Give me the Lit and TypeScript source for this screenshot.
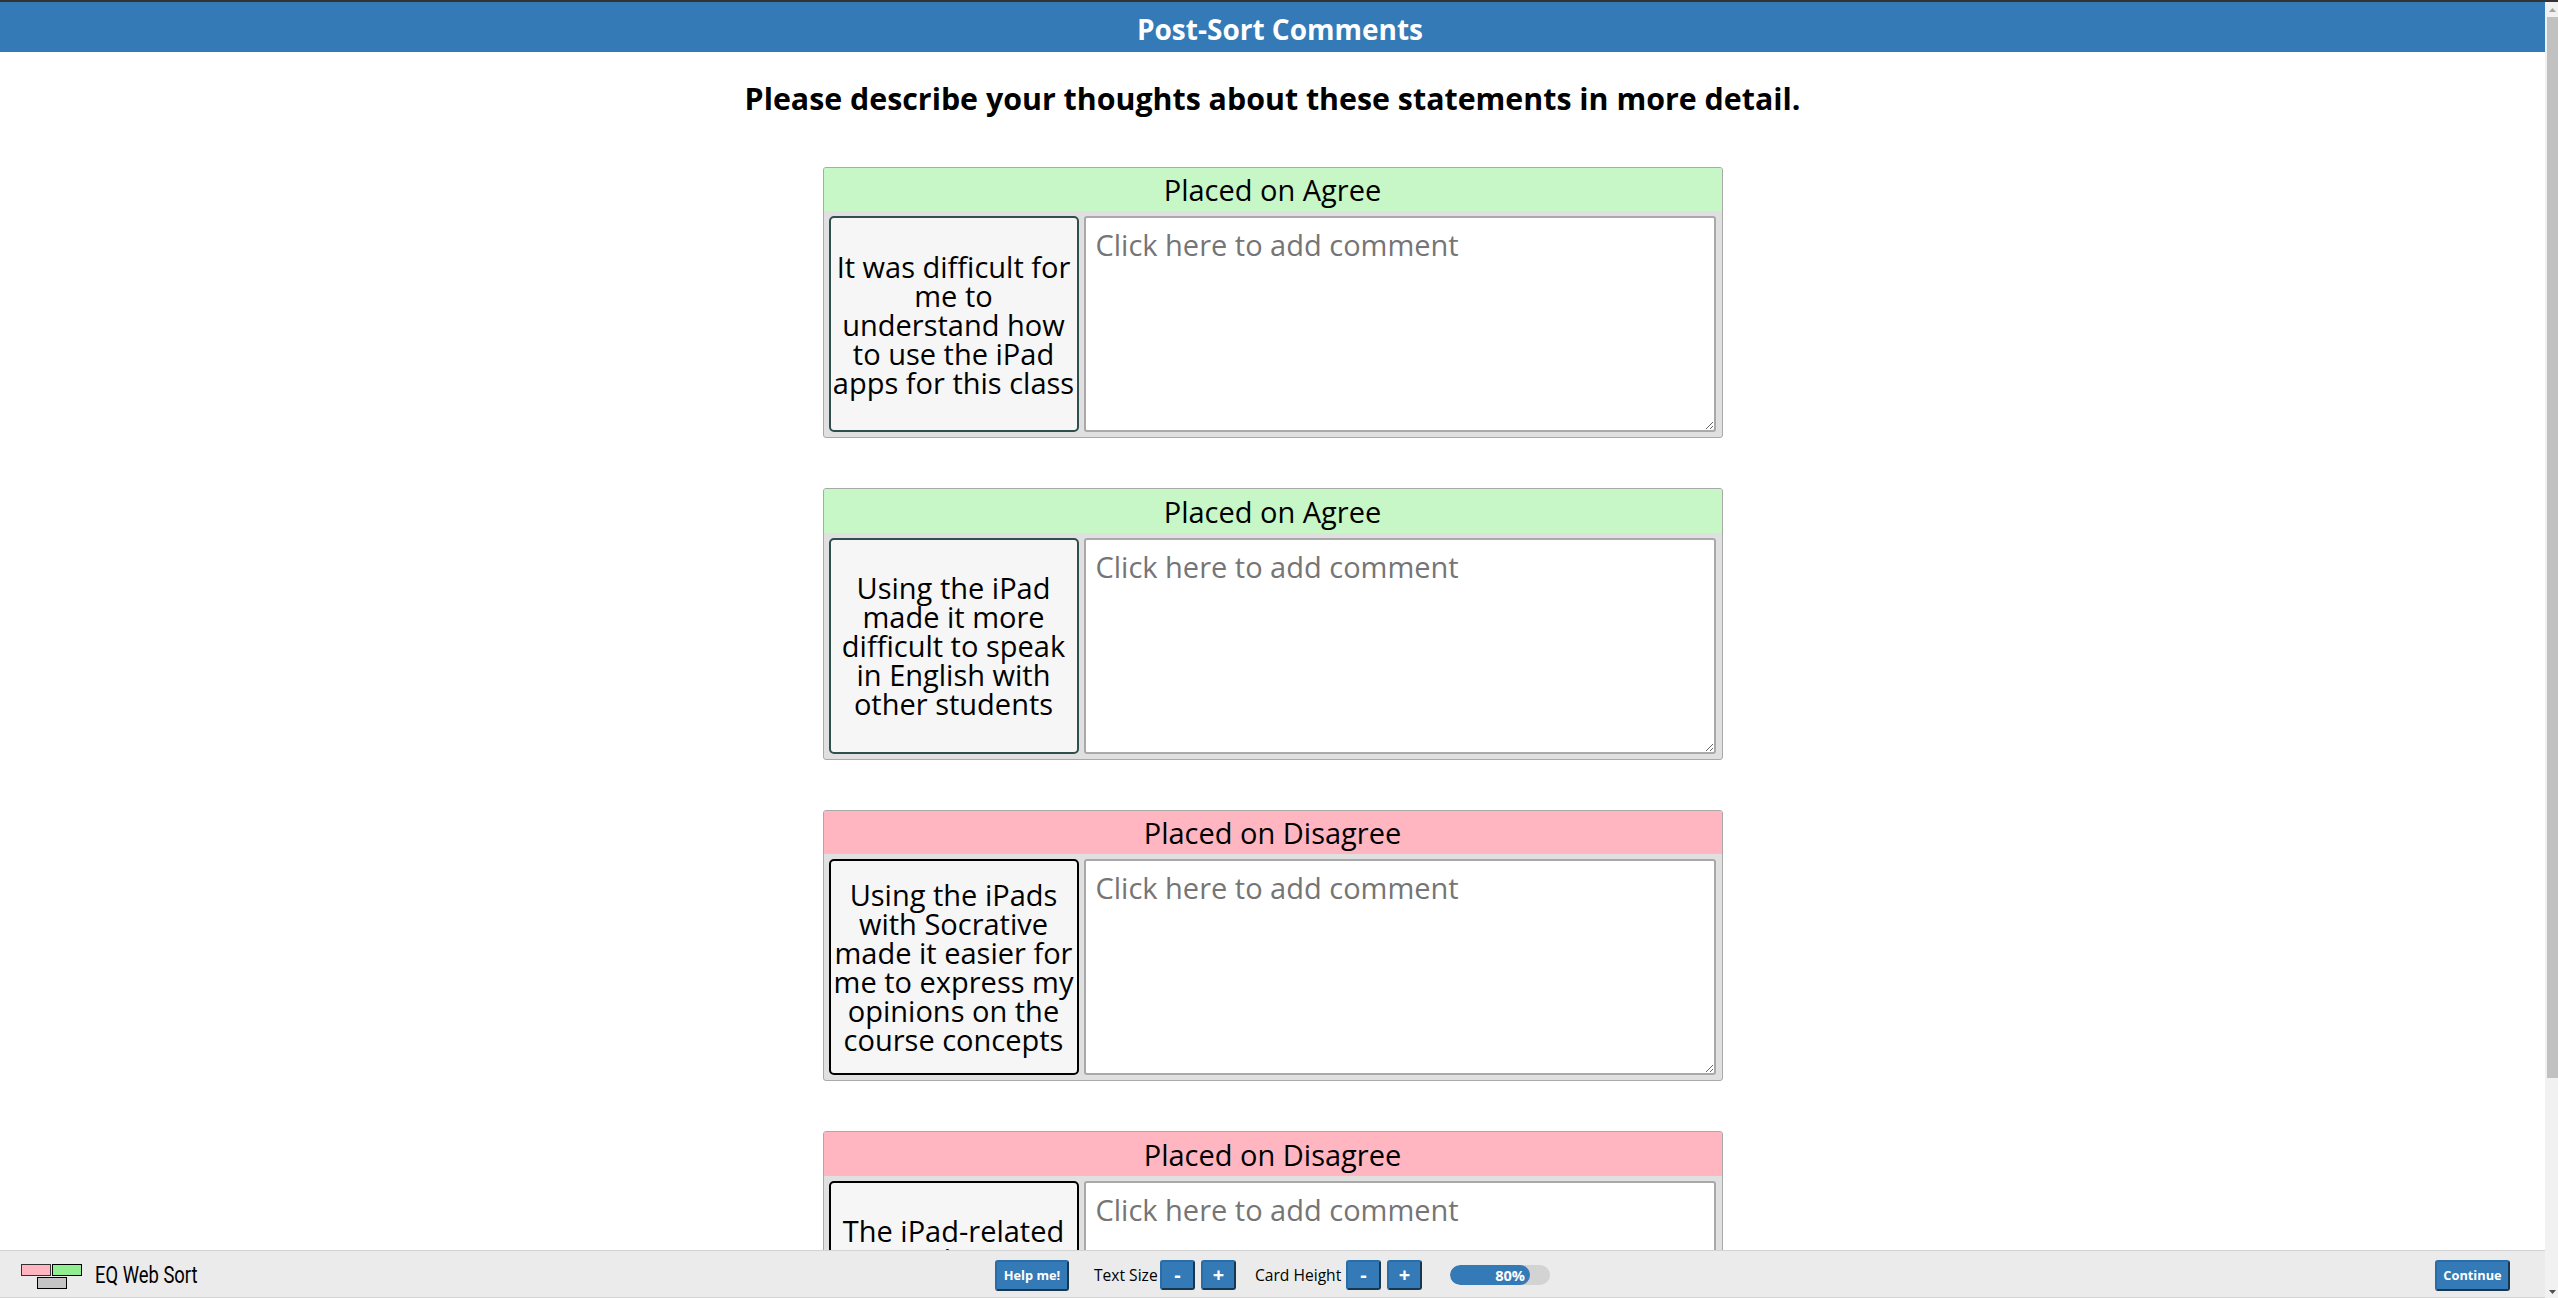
import { LitElement, html, css } from "lit";
import { customElement, property } from "lit/decorators.js";

@customElement("comment-card")
class CommentCard extends LitElement {
  @property() side = "agree";
  @property() statement = "";

  static styles = css`
    :host { display: block; }
    .panel { box-sizing: border-box; width: 900px; height: 271.39px; border: 1px solid darkgray; border-radius: 3px; background: #e0e0e0; overflow: hidden; }
    .head { box-sizing: border-box; height: 43.39px; padding-top: 0.39px; text-align: center; font-size: 29px; line-height: 43px; }
    .agree .head { background: #c7f6c7; }
    .disagree .head { background: lightpink; }
    .row { display: flex; padding: 5px 6px 5px 5px; gap: 5px; }
    .card { box-sizing: border-box; width: 250px; height: 216px; border: 2px solid darkslategray; border-radius: 5px; padding: 0 2px; background: #f6f6f6; display: flex; align-items: center; justify-content: center; text-align: center; font-size: 29px; line-height: 29px; }
    .disagree .card { border-color: black; }
    textarea { display: block; box-sizing: border-box; width: 632px; height: 216px; margin: 0; border: 2px solid darkgray; border-radius: 3px; padding: 7px 10px; font: 29px "Open Sans", sans-serif; resize: both; background: white; outline: none; }
    textarea::placeholder { color: #757575; }
  `;

  render() {
    return html`<div class="panel ${this.side}">
      <div class="head">${this.side === "agree" ? "Placed on Agree" : "Placed on Disagree"}</div>
      <div class="row">
        <div class="card"><span>${this.statement}</span></div>
        <textarea placeholder="Click here to add comment"></textarea>
      </div>
    </div>`;
  }
}

const statements = [
  { side: "agree", text: "It was difficult for me to understand how to use the iPad apps for this class" },
  { side: "agree", text: "Using the iPad made it more difficult to speak in English with other students" },
  { side: "disagree", text: "Using the iPads with Socrative made it easier for me to express my opinions on the course concepts" },
  { side: "disagree", text: "The iPad-related apps also gave me more practice speaking English in class" },
];

@customElement("app-root")
class AppRoot extends LitElement {
  static styles = css`
    :host { display: block; font-family: "Open Sans", sans-serif; color: black; }
    .window { box-sizing: border-box; height: 1298px; border-top: 2px solid #333; display: flex; background: white; overflow: hidden; }
    .page { width: 2545px; display: flex; flex-direction: column; }
    .title { flex: none; height: 50px; background: #337ab7; color: white; display: flex; align-items: center; justify-content: center; font-size: 28px; font-weight: 700; padding: 4px 0 0 15px; box-sizing: border-box; }
    .content { flex: 1; min-height: 0; overflow: hidden; display: flex; flex-direction: column; align-items: center; }
    .prompt { flex: none; height: 115.06px; padding-top: 25px; box-sizing: border-box; font-size: 30.35px; line-height: 43px; font-weight: 700; }
    .list { display: flex; flex-direction: column; gap: 50px; }
    .footer { flex: none; box-sizing: border-box; height: 48px; border-top: 1px solid lightgray; border-bottom: 1px solid lightgray; background: #ebebeb; display: flex; align-items: center; padding-top: 3px; }
    .brand { display: flex; align-items: center; width: 995px; padding-left: 20px; box-sizing: border-box; }
    .logo { display: block; margin-top: 1px; }
    .name { margin-left: 12px; font: 23px "Roboto", sans-serif; transform-origin: left; transform: scaleX(0.8); white-space: nowrap; }
    .btn { box-sizing: border-box; border: 2px solid; border-color: #286da8 #17364f #17364f #286da8; border-radius: 3px; background: #337ab7; color: white; font: 700 12.8px "Open Sans", sans-serif; padding: 0 0 1px; margin: 0; }
    .help { width: 74px; height: 31px; }
    .btn.step { width: 35px; height: 30px; margin-bottom: 1px; padding: 0; font-size: 20px; line-height: 20px; }
    .label { margin-bottom: 1px; font-size: 15.6px; white-space: nowrap; }
    .track { width: 100px; height: 20px; margin-bottom: 1px; border-radius: 10px; background: lightgray; overflow: hidden; }
    .fill { box-sizing: border-box; height: 20px; border-radius: 10px; background: #337ab7; color: white; font-size: 14.6px; font-weight: 700; line-height: 21px; text-align: right; padding-right: 5px; }
    .text-size { margin-left: 25px; width: 66px; }
    .card-height { margin-left: 19px; width: 91px; }
    .btn.gap { margin-left: 6px; }
    .bar { margin-left: 28px; }
    .next { width: 75px; height: 31px; margin-left: auto; margin-right: 35px; }
    .scroll { width: 13px; background: #f1f1f1; display: flex; flex-direction: column; }
    .thumb { width: 11px; margin-left: 2px; height: 1061px; background: #c1c1c1; }
    .arrow { display: block; flex: none; }
    .space { flex: 1; }
  `;

  render() {
    return html`<div class="window">
      <div class="page">
        <div class="title">Post-Sort Comments</div>
        <div class="content">
          <div class="prompt">Please describe your thoughts about these statements in more detail.</div>
          <div class="list">
            ${statements.map((s) => html`<comment-card .side=${s.side} .statement=${s.text}></comment-card>`)}
          </div>
        </div>
        <div class="footer">
          <div class="brand">
            <svg class="logo" width="63" height="26" viewBox="0 0 63 26">
              <rect x="1.5" y="1.5" width="29" height="11" fill="lightpink" stroke="#333" />
              <rect x="32.5" y="1.5" width="29" height="11" fill="lightgreen" stroke="black" />
              <rect x="17.5" y="14.5" width="29" height="11" fill="#c4c4c4" stroke="black" />
            </svg>
            <span class="name">EQ Web Sort</span>
          </div>
          <button class="btn help">Help me!</button>
          <span class="label text-size">Text Size</span>
          <button class="btn step">-</button>
          <button class="btn step gap">+</button>
          <span class="label card-height">Card Height</span>
          <button class="btn step">-</button>
          <button class="btn step gap">+</button>
          <div class="track bar"><div class="fill" style="width:80%">80%</div></div>
          <button class="btn next">Continue</button>
        </div>
      </div>
      <div class="scroll">
        <svg class="arrow" width="13" height="15"><path d="M4 10h7l-3.5-4z" fill="#a3a3a3" /></svg>
        <div class="thumb"></div>
        <div class="space"></div>
        <svg class="arrow" width="13" height="10"><path d="M4 2h7l-3.5 4z" fill="#505050" /></svg>
      </div>
    </div>`;
  }
}
